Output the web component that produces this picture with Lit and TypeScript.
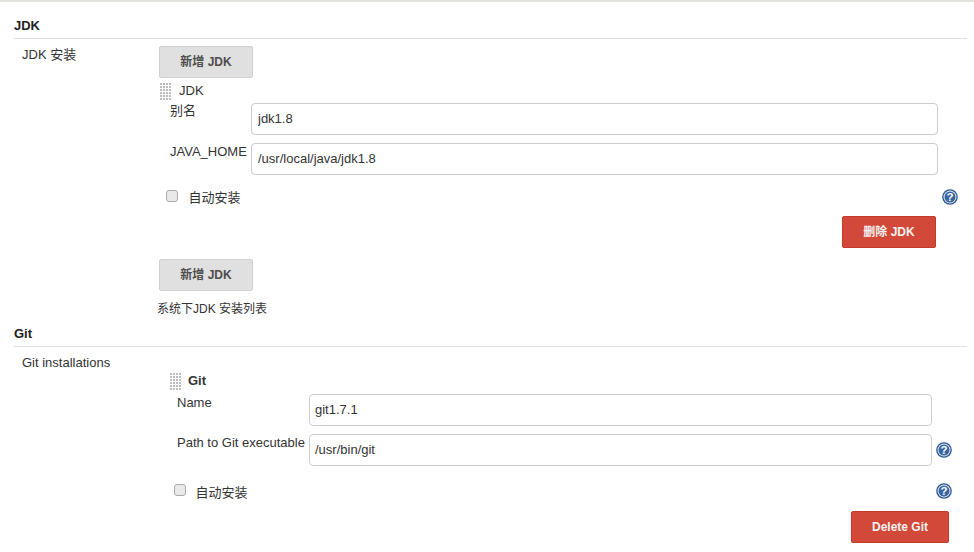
import { LitElement, html, css } from "lit";
import { customElement } from "lit/decorators.js";

const help = html`<svg class="help" width="16" height="16" viewBox="0 0 16 16" aria-hidden="true">
  <circle cx="8" cy="8" r="7.8" fill="#2a5694"></circle>
  <circle cx="8" cy="8" r="6.5" fill="#e4ebf5"></circle>
  <circle cx="8" cy="8" r="5.5" fill="#38659f"></circle>
  <text x="8" y="12.2" text-anchor="middle" font-family="Liberation Sans" font-weight="700" font-size="11.5" fill="#fff">?</text>
</svg>`;

@customElement("app-root")
export class AppRoot extends LitElement {
  static styles = css`
    :host {
      display: block;
      width: 974px;
      height: 552px;
      overflow: hidden;
      box-sizing: border-box;
      background: #fff;
      border-top: 2px solid #e3e3de;
      padding: 0 7px 0 14px;
      font: 13px/16px "Liberation Sans", "Noto Sans CJK SC", sans-serif;
      color: #333;
    }
    .section { font-weight: 700; height: 16px; padding-top: 16px; padding-bottom: 4px; border-bottom: 1px solid #e0e0e0; color: #222; }
    .section.git { padding-top: 0; padding-bottom: 4px; margin-top: 9px; }
    .row { display: flex; }
    .row-label { width: 137px; padding-left: 8px; padding-top: 8px; flex: none; }
    .content { flex: 1; min-width: 0; padding-top: 7px; }
    .btn {
      display: block; box-sizing: border-box; height: 32px; border-radius: 2px;
      font: 700 12px/30px "Liberation Sans", "Noto Sans CJK SC", sans-serif; text-align: center; padding: 0;
    }
    .add { width: 94px; background: #e0e0e0; border: 1px solid #d0d0d0; color: #4d4d4d; }
    .del { background: #d24939; border: 1px solid #c4392a; color: #f2f2f2; }
    .block-head { display: flex; align-items: center; gap: 8px; height: 18px; margin-top: 4px; }
    .handle {
      width: 11px; height: 17px; flex: none; align-self: flex-end;
      background:
        linear-gradient(#fff 1px, transparent 0) 0 2px / 3px 3px,
        linear-gradient(90deg, #fff 1px, transparent 0) 2px 0 / 3px 3px,
        #bdbdbd;
    }
    .git-block .block-head b { margin-left: -1px; }
    .jdk { padding-left: 1px; width: 779px; }
    .form { display: grid; row-gap: 8px; align-items: start; }
    .jdk .form { grid-template-columns: 81px 687px; padding-left: 10px; margin-top: 3px; }
    .git-block { padding-left: 11px; padding-top: 14px; }
    .git-block .form { grid-template-columns: 132px 623px 20px; padding-left: 7px; margin-top: 4px; }
    .flabel { white-space: nowrap; }
    .flabel.low { padding-top: 1px; }
    .input {
      box-sizing: border-box; width: 100%; height: 32px; display: block; margin: 0; padding: 0 6px 2px;
      border: 1px solid #ccc; border-radius: 4px; background: #fff; color: #333;
      font: 13px "Liberation Sans", "Noto Sans CJK SC", sans-serif; outline: none;
    }
    .git-block .input { padding-left: 5px; }
    .form .help { margin: 8px 0 0 4px; }
    .check-row { display: flex; align-items: center; height: 16px; }
    .jdk-check { margin: 14px 0 0 7px; width: 792px; }
    .git-check { margin: 17px 0 0 4px; width: 778px; }
    .box { width: 12px; height: 12px; box-sizing: border-box; flex: none; margin-bottom: 2px; border: 1px solid #a9a9a9; border-radius: 3px; background: #e9e9e9; }
    .check-label { margin-left: 10.5px; flex: 1; position: relative; top: 1px; }
    .git-check .check-label { top: 2px; margin-left: 9.5px; }
    .check-row .help { flex: none; }
    .del-wrap { display: flex; justify-content: flex-end; }
    .jdk-del { width: 777px; margin-top: 11px; }
    .jdk-del .del { width: 94px; }
    .git-del { width: 779px; margin-top: 12px; }
    .git-del .del { width: 98px; }
    .second { margin-top: 11px; }
    .note { margin: 10px 0 0 -2px; height: 16px; font-size: 12px; }
  `;

  render() {
    return html`
      <div class="section">JDK</div>
      <div class="row">
        <div class="row-label">JDK 安装</div>
        <div class="content">
          <button class="btn add">新增 JDK</button>
          <div class="jdk">
            <div class="block-head"><span class="handle"></span><span>JDK</span></div>
            <div class="form">
              <div class="flabel">别名</div><input class="input" .value=${"jdk1.8"} />
              <div class="flabel low">JAVA_HOME</div><input class="input" .value=${"/usr/local/java/jdk1.8"} />
            </div>
          </div>
          <div class="check-row jdk-check"><span class="box"></span><span class="check-label">自动安装</span>${help}</div>
          <div class="del-wrap jdk-del"><button class="btn del">删除 JDK</button></div>
          <button class="btn add second">新增 JDK</button>
          <div class="note">系统下JDK 安装列表</div>
        </div>
      </div>
      <div class="section git">Git</div>
      <div class="row">
        <div class="row-label">Git installations</div>
        <div class="content">
          <div class="git-block">
            <div class="block-head"><span class="handle"></span><b>Git</b></div>
            <div class="form">
              <div class="flabel low">Name</div><input class="input" .value=${"git1.7.1"} /><span></span>
              <div class="flabel low">Path to Git executable</div><input class="input" .value=${"/usr/bin/git"} />${help}
            </div>
            <div class="check-row git-check"><span class="box"></span><span class="check-label">自动安装</span>${help}</div>
            <div class="del-wrap git-del"><button class="btn del">Delete Git</button></div>
          </div>
        </div>
      </div>
    `;
  }
}
